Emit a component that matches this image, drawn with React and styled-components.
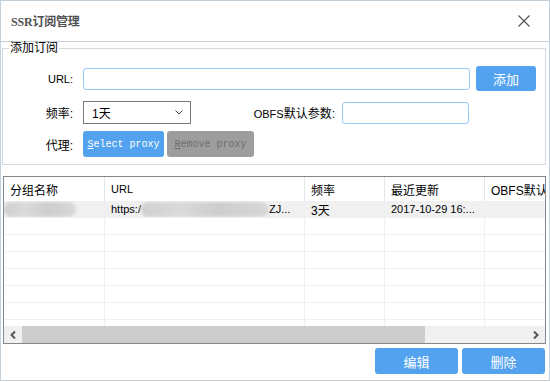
import React from 'react';
import styled, { createGlobalStyle } from 'styled-components';

const columns = [
    { title: '分组名称', width: 101 },
    { title: 'URL', width: 200, latin: true },
    { title: '频率', width: 80 },
    { title: '最近更新', width: 100 },
    { title: 'OBFS默认参数', width: 100 },
];

const emptyRows = [1, 2, 3, 4, 5, 6, 7];

function App() {
    return (
        <>
            <GlobalStyle />
            <Window>
                <TitleBar>
                    <Title><TitleLatin>SSR</TitleLatin>订阅管理</Title>
                    <svg width="12" height="12" viewBox="0 0 12 12">
                        <path d="M0.5 0.5 L11.5 11.5 M11.5 0.5 L0.5 11.5" stroke="#505050" strokeWidth="1.1" fill="none" />
                    </svg>
                </TitleBar>

                <Body>
                    <Group>
                        <Legend>添加订阅</Legend>
                        <FormRow $gap={0}>
                            <Label><Lat>URL:</Lat></Label>
                            <TextInput $width={387} />
                            <BlueButton $width={60} $left={6}>添加</BlueButton>
                        </FormRow>
                        <FormRow $gap={10}>
                            <Label>频率:</Label>
                            <Select>
                                <span>1天</span>
                                <svg width="8" height="5" viewBox="0 0 8 5">
                                    <path d="M0.5 0.5 L4 4 L7.5 0.5" stroke="#444" strokeWidth="1" fill="none" />
                                </svg>
                            </Select>
                            <Label $width={144}><Lat>OBFS</Lat>默认参数:</Label>
                            <TextInput $width={127} $left={7} />
                        </FormRow>
                        <FormRow $gap={7}>
                            <Label>代理:</Label>
                            <ProxyButton $width={81}><u>S</u>elect proxy</ProxyButton>
                            <ProxyButton $width={87} $disabled><u>R</u>emove proxy</ProxyButton>
                        </FormRow>
                    </Group>

                    <Grid>
                        <GridHead>
                            {columns.map(c => (
                                <HeadCell key={c.title} $width={c.width}>
                                    {c.latin ? <Lat>{c.title}</Lat> : c.title}
                                </HeadCell>
                            ))}
                        </GridHead>
                        <Rows>
                            <DataRow $selected>
                                <Cell $width={101}><Blur $width={72} /></Cell>
                                <Cell $width={200}>
                                    <Lat>https:/</Lat><Blur $width={128} /><Lat>ZJ...</Lat>
                                </Cell>
                                <Cell $width={80}>3天</Cell>
                                <Cell $width={100}><Lat>2017-10-29 16:...</Lat></Cell>
                                <Cell $width={100}></Cell>
                            </DataRow>
                            {emptyRows.map(r => (
                                <DataRow key={r}>
                                    {columns.map(c => <Cell key={c.title} $width={c.width} />)}
                                </DataRow>
                            ))}
                        </Rows>
                        <ScrollBar>
                            <ScrollArrow>
                                <svg width="6" height="8" viewBox="0 0 6 8">
                                    <path d="M5 0.5 L1.5 4 L5 7.5" stroke="#555" strokeWidth="2" fill="none" />
                                </svg>
                            </ScrollArrow>
                            <Thumb />
                            <ScrollArrow>
                                <svg width="6" height="8" viewBox="0 0 6 8">
                                    <path d="M1 0.5 L4.5 4 L1 7.5" stroke="#555" strokeWidth="2" fill="none" />
                                </svg>
                            </ScrollArrow>
                        </ScrollBar>
                    </Grid>

                    <Footer>
                        <BlueButton $width={83}>编辑</BlueButton>
                        <BlueButton $width={83} $left={4}>删除</BlueButton>
                    </Footer>
                </Body>
            </Window>
        </>
    );
}

export default App;

const GlobalStyle = createGlobalStyle`
    html, body {
        margin: 0;
        padding: 0;
        background: #fff;
    }
    body {
        font-family: "Liberation Sans", "Noto Sans CJK SC", sans-serif;
        font-size: 12px;
        color: #000;
    }
    * {
        box-sizing: border-box;
    }
`;

const Window = styled.div`
    width: 550px;
    height: 381px;
    border: 1px solid #c4d0d9;
    display: flex;
    flex-direction: column;
    background: #fff;
`;

const TitleBar = styled.div`
    height: 41px;
    flex-shrink: 0;
    display: flex;
    align-items: center;
    justify-content: space-between;
    padding: 0 19px 0 10px;
    border-bottom: 1px solid #c6d0d8;
`;

const Title = styled.div`
    font-family: "Liberation Serif", "Noto Sans CJK SC", serif;
    font-weight: 700;
    font-size: 12px;
    color: #505050;
    letter-spacing: -0.2px;
`;

const TitleLatin = styled.span`
    font-size: 12px;
`;

const Lat = styled.span`
    font-size: 11px;
`;

const Body = styled.div`
    flex: 1;
    display: flex;
    flex-direction: column;
    padding: 0 3px 0 1px;
`;

const Group = styled.fieldset`
    margin: 0;
    padding: 0 0 7px 6px;
    border: 1px solid #d3d9de;
    min-width: 0;
`;

const Legend = styled.legend`
    padding: 0 1px;
    font-size: 12px;
    line-height: 12px;
    height: 12px;
`;

const FormRow = styled.div`
    display: flex;
    align-items: center;
    margin-top: ${p => p.$gap}px;
    &:first-of-type {
        margin-top: 12px;
    }
`;

const Label = styled.div`
    width: ${p => p.$width || 64}px;
    margin-right: ${p => (p.$width ? 0 : 10)}px;
    text-align: right;
    white-space: nowrap;
    font-size: 12px;
`;

const TextInput = styled.input`
    width: ${p => p.$width}px;
    height: 22px;
    margin: 0 0 0 ${p => p.$left || 0}px;
    border: 1px solid #99cbf7;
    border-radius: 3px;
    outline: none;
    background: #fff;
`;

const Select = styled.div`
    width: 108px;
    height: 23px;
    border: 1px solid #7a7a7a;
    display: flex;
    align-items: center;
    justify-content: space-between;
    padding: 0 7px 0 8px;
    font-size: 12px;
`;

const BlueButton = styled.button`
    width: ${p => p.$width}px;
    height: ${p => (p.$width === 60 ? 25 : 26)}px;
    margin-left: ${p => p.$left || 0}px;
    border: none;
    border-radius: 3px;
    background-color: #52a2ef;
    color: #fff;
    font-family: "Noto Sans CJK SC", sans-serif;
    font-size: 13px;
    padding: 0;
    cursor: pointer;
`;

const ProxyButton = styled.button`
    width: ${p => p.$width}px;
    height: 26px;
    margin-right: 3px;
    padding: 0;
    border: none;
    border-radius: 3px;
    background-color: ${p => (p.$disabled ? '#9d9d9d' : '#52a2ef')};
    color: ${p => (p.$disabled ? '#6e6e6e' : '#fff')};
    font-family: "Liberation Mono", monospace;
    font-size: 10px;
    white-space: nowrap;
`;

const Grid = styled.div`
    margin-top: 11px;
    margin-left: 1px;
    height: 168px;
    border: 1px solid #828790;
    display: flex;
    flex-direction: column;
    overflow: hidden;
`;

const GridHead = styled.div`
    display: flex;
    height: 24px;
    flex-shrink: 0;
`;

const HeadCell = styled.div`
    flex: 0 0 ${p => p.$width}px;
    display: flex;
    align-items: center;
    padding: 0 6px;
    border-right: 1px solid #e5e5e5;
    white-space: nowrap;
    overflow: hidden;
    font-size: 12px;
`;

const Rows = styled.div`
    flex: 1;
    overflow: hidden;
`;

const DataRow = styled.div`
    display: flex;
    height: 17px;
    background: ${p => (p.$selected ? '#f0f0f0' : '#fff')};
    border-bottom: 1px solid #f0f0f0;
`;

const Cell = styled.div`
    flex: 0 0 ${p => p.$width}px;
    display: flex;
    align-items: center;
    padding: 0 6px;
    border-right: 1px solid #f0f0f0;
    white-space: nowrap;
    overflow: hidden;
    font-size: 12px;
    &:first-child {
        padding-left: 0;
    }
`;

const Blur = styled.span`
    display: inline-block;
    flex-shrink: 0;
    width: ${p => p.$width}px;
    height: 15px;
    border-radius: 8px;
    background: linear-gradient(90deg, #cfcfcf, #dadada 30%, #cdcdcd 60%, #d8d8d8);
    filter: blur(1.5px);
`;

const ScrollBar = styled.div`
    display: flex;
    height: 17px;
    flex-shrink: 0;
    background: #f0f0f0;
`;

const ScrollArrow = styled.div`
    width: 18px;
    display: flex;
    align-items: center;
    justify-content: center;
`;

const Thumb = styled.div`
    width: 403px;
    background: #cdcdcd;
    margin-right: auto;
`;

const Footer = styled.div`
    display: flex;
    justify-content: flex-end;
    margin-top: 4px;
    padding-right: 1px;
`;
